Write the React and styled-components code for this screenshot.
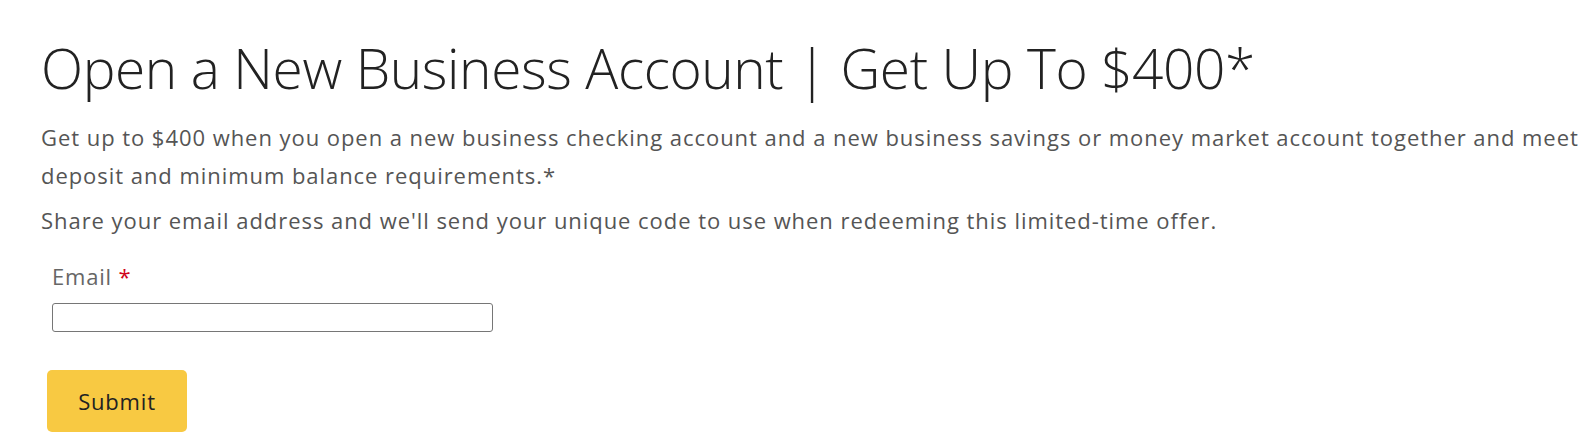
import React from 'react';
import styled, { createGlobalStyle } from 'styled-components';

const GlobalStyle = createGlobalStyle`
  html, body {
    margin: 0;
    padding: 0;
    background: #ffffff;
    overflow: hidden;
  }
  body {
    font-family: "Open Sans", "Noto Sans", Arial, sans-serif;
  }
`;

const Page = styled.main`
  width: 1600px;
  padding: 32px 0 0 41px;
  box-sizing: border-box;
`;

const Heading = styled.h1`
  margin: 0 0 14px;
  font-size: 55px;
  font-weight: 300;
  line-height: 72px;
  letter-spacing: -0.4px;
  color: #222222;
`;

const Lead = styled.p`
  margin: 0 0 7px;
  font-size: 22px;
  line-height: 38px;
  letter-spacing: 0.95px;
  color: #555555;
`;

const Form = styled.form`
  display: flex;
  flex-direction: column;
  align-items: flex-start;
  margin-top: 22px;
`;

const Field = styled.div`
  display: flex;
  flex-direction: column;
  gap: 12px;
  padding-left: 11px;
`;

const Label = styled.label`
  font-size: 22px;
  letter-spacing: 0.8px;
  color: #666666;
`;

const Required = styled.span`
  color: #d0021b;
`;

const Input = styled.input`
  width: 441px;
  height: 29px;
  box-sizing: border-box;
  border: 1px solid #767676;
  border-radius: 3px;
  padding: 0 6px;
  font: inherit;
  font-size: 16px;
`;

const SubmitButton = styled.button`
  margin: 38px 0 0 6px;
  width: 140px;
  height: 62px;
  border: none;
  border-radius: 5px;
  background: #f8c942;
  color: #222222;
  font-family: "Open Sans", "Noto Sans", Arial, sans-serif;
  font-size: 22px;
  letter-spacing: 0.8px;
  cursor: pointer;
`;

export default function App() {
  return (
    <>
      <GlobalStyle />
      <Page>
        <Heading>Open a New Business Account | Get Up To $400*</Heading>
        <Lead>
          Get up to $400 when you open a new business checking account and a new business savings or money market
          account together and meet deposit and minimum balance requirements.*
        </Lead>
        <Lead>
          Share your email address and we'll send your unique code to use when redeeming this limited-time offer.
        </Lead>
        <Form onSubmit={e => e.preventDefault()}>
          <Field>
            <Label htmlFor="email">
              Email <Required>*</Required>
            </Label>
            <Input id="email" type="email" />
          </Field>
          <SubmitButton type="submit">Submit</SubmitButton>
        </Form>
      </Page>
    </>
  );
}
